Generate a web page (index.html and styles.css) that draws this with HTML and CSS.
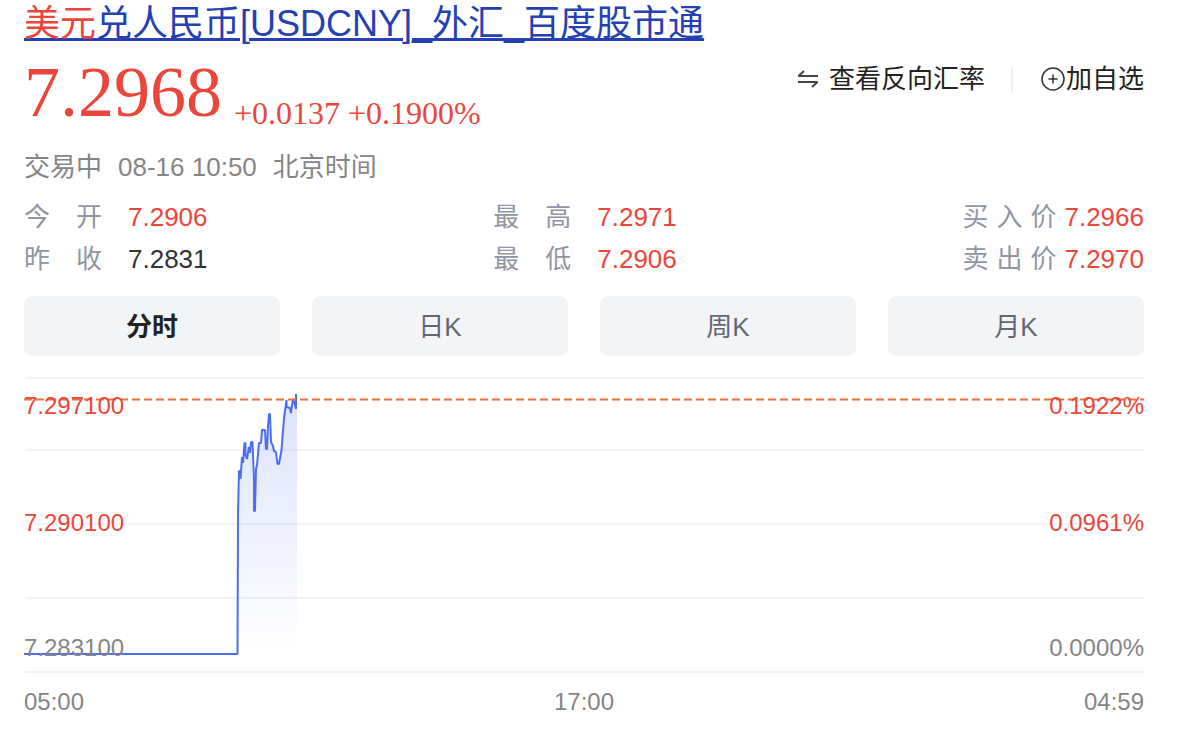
FILE: index.html
```html
<!DOCTYPE html>
<html lang="zh-CN">
<head>
  <meta charset="UTF-8" />
  <meta name="viewport" content="width=device-width, initial-scale=1.0"/>
  <title>美元兑人民币[USDCNY]_外汇_百度股市通</title>
  <link rel="stylesheet" href="styles.css">
</head>
<body>
  <h3 class="title"><a href="#"><em>美元</em>兑人民币[USDCNY]_外汇_百度股市通</a></h3>

  <div class="quote">
    <div class="price-row">
      <span class="price">7.2968</span>
      <span class="change">+0.0137 +0.1900%</span>
    </div>
    <div class="actions">
      <button type="button" class="action">
        <svg class="icon-swap" viewBox="0 0 22 20" aria-hidden="true">
          <path d="M21 7H1.500L7 2M1 13H20.500L15 18"/>
        </svg>
        查看反向汇率
      </button>
      <span class="divider"></span>
      <button type="button" class="action">
        <svg class="icon-add" viewBox="0 0 24 24" aria-hidden="true">
          <circle cx="12" cy="12" r="11"/>
          <path d="M12 7.500v9M7.500 12h9"/>
        </svg>加自选
      </button>
    </div>
  </div>

  <div class="meta">
    <span>交易中</span>
    <span>08-16 10:50</span>
    <span>北京时间</span>
  </div>

  <div class="stats">
    <dl class="stat-list">
      <dt>今 开</dt><dd class="up">7.2906</dd>
      <dt>昨 收</dt><dd>7.2831</dd>
    </dl>
    <dl class="stat-list">
      <dt>最 高</dt><dd class="up">7.2971</dd>
      <dt>最 低</dt><dd class="up">7.2906</dd>
    </dl>
    <dl class="stat-list stat-wide">
      <dt>买 入 价</dt><dd class="up">7.2966</dd>
      <dt>卖 出 价</dt><dd class="up">7.2970</dd>
    </dl>
  </div>

  <div class="tabs">
    <button type="button" class="tab active">分时</button>
    <button type="button" class="tab">日K</button>
    <button type="button" class="tab">周K</button>
    <button type="button" class="tab">月K</button>
  </div>

  <div class="chart">
    <svg class="plot" viewBox="0 0 1120 296" preserveAspectRatio="none" aria-hidden="true">
      <defs>
        <linearGradient id="fill" x1="0" y1="17" x2="0" y2="277" gradientUnits="userSpaceOnUse">
          <stop offset="0" stop-color="#4e6ef2" stop-opacity="0.2"/>
          <stop offset="1" stop-color="#4e6ef2" stop-opacity="0"/>
        </linearGradient>
      </defs>
      <path class="grid" d="M2 1H1120M2 73H1120M2 147H1120M2 221H1120M2 295H1120"/>
      <path fill="url(#fill)" d="M213 277L214 137L215 101L216 94L217 102L218 80L219 87L220 66L222 82L224 66L225 78L227 65L228 74L230 134L232 92L234 65L236 65L238 50L240 54L242 73L245 37L247 66L251 73L253 88L255 87L258 70L262 22L264 30L267 28L269 36L271 20L273 18V277Z"/>
      <path class="line" d="M0 277H213.500L214 137L215 94L216.500 94V102L218 80V81H219V86L220.500 66H221.500V78L223 82L225 70L226 76L227 65H228.500L230 104V134H231L232 92L233 88L235 66H237L238 53H241L242 72H243L244 49L245 37H246L247 65L249 69L250 74L252 75L253.500 87H255L257.500 73L260 41L261.500 30L262.500 23V30L266 31L267 36L269 22L270.500 26L272 32V17"/>
      <path class="current" d="M0 22.500H1120"/>
    </svg>
    <div class="axis">
      <div class="axis-row up"><span>7.297100</span><span>0.1922%</span></div>
      <div class="axis-row up"><span>7.290100</span><span>0.0961%</span></div>
      <div class="axis-row"><span>7.283100</span><span>0.0000%</span></div>
    </div>
  </div>
  <div class="times">
    <span>05:00</span>
    <span>17:00</span>
    <span>04:59</span>
  </div>
</body>
</html>
```
FILE: styles.css
```css
body { margin: 0; padding: 0 42px 0 24px; background: #fff; color: #333; font-family: "Liberation Sans", Arial, "Noto Sans CJK SC", sans-serif; font-size: 26px; }
button { font: inherit; border: 0; padding: 0; cursor: pointer; }

.title { margin: 0; font-size: 36px; font-weight: normal; line-height: 48px; }
.title a { color: #2440b3; text-decoration: underline; text-decoration-thickness: 3px; text-underline-offset: 2px; }
.title em { color: #eb463c; font-style: normal; }

.quote { display: flex; justify-content: space-between; align-items: flex-start; height: 96px; }
.price-row { display: flex; align-items: flex-end; gap: 12px; color: #eb463c; font-family: "Liberation Serif", "Times New Roman", serif; white-space: nowrap; }
.price { font-size: 72px; line-height: 88px; }
.change { font-size: 32px; line-height: 46px; }
.actions { display: flex; align-items: center; padding-top: 12px; }
.action { display: flex; align-items: center; background: none; color: #222; line-height: 38px; white-space: nowrap; }
.icon-swap { width: 22px; height: 20px; margin-right: 10px; fill: none; stroke: #444; stroke-width: 2; stroke-linejoin: bevel; }
.icon-add { width: 24px; height: 24px; margin-right: 1px; fill: none; stroke: #333; stroke-width: 1.5; }
.divider { width: 2px; height: 24px; margin: 0 28px 0 26px; background: #eee; }

.meta { display: flex; gap: 16px; color: #858585; line-height: 46px; }

.stats { display: flex; justify-content: space-between; padding-top: 6px; }
.stat-list { display: grid; grid-template-columns: 78px auto; column-gap: 26px; margin: 0; line-height: 42px; }
.stat-wide { grid-template-columns: 94px auto; column-gap: 8px; }
.stat-list dt { color: #9195a3; text-align-last: justify; }
.stat-list dd { margin: 0; }
.up, .stat-list .up { color: #eb463c; }

.tabs { display: grid; grid-template-columns: repeat(4, 1fr); gap: 32px; margin-top: 16px; }
.tab { height: 60px; padding-bottom: 4px; border-radius: 8px; background: #f3f4f6; color: #626675; }
.tab.active { color: #222; font-weight: bold; }

.chart { position: relative; height: 296px; margin-top: 21px; color: #858585; font-size: 24px; }
.plot { display: block; width: 100%; height: 100%; }
.grid { fill: none; stroke: #f3f3f4; stroke-width: 2; }
.line { fill: none; stroke: #4e6ef2; stroke-width: 2; stroke-linejoin: bevel; }
.current { fill: none; stroke: #e9733a; stroke-width: 2; stroke-dasharray: 8 4; }
/* price and percent labels sit over the plot */
.axis { position: absolute; inset: 14px 0 auto; display: grid; grid-template-rows: 117px 125px auto; }
.axis-row { display: flex; justify-content: space-between; line-height: 30px; }

.times { display: flex; justify-content: space-between; color: #858585; font-size: 24px; line-height: 58px; }
```
